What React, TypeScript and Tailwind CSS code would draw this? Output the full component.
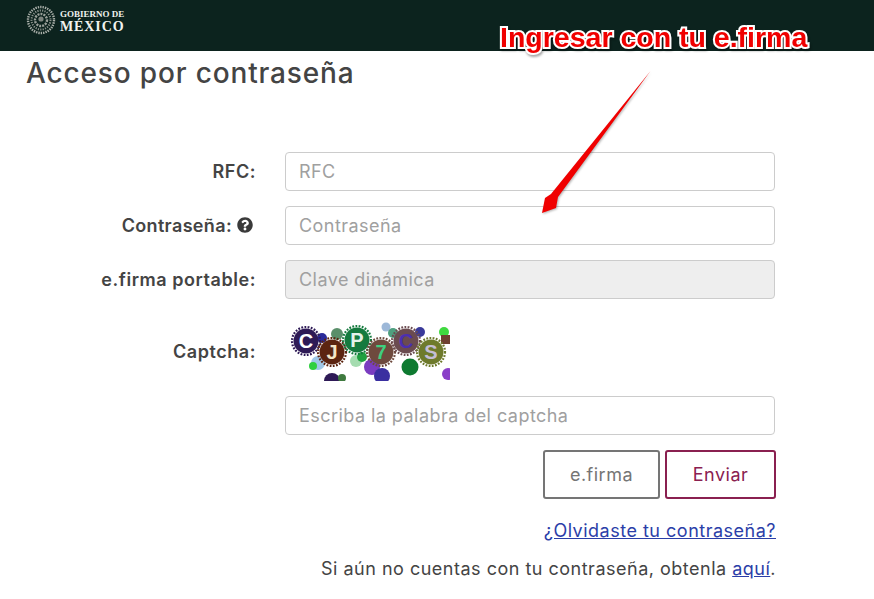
import React from "react";
import { FaQuestionCircle } from "react-icons/fa";

const font = "font-['Inter','Noto_Sans',sans-serif]";

const Row = ({ label, children }: { label: React.ReactNode; children: React.ReactNode }) => (
  <div className="flex items-center">
    <div className="w-[256px] flex justify-end items-center text-[18px] font-semibold text-[#444] tracking-[0.55px]">
      {label}
    </div>
    <div className="ml-[29px] w-[490px]">{children}</div>
  </div>
);

const Field = ({ placeholder, disabled }: { placeholder: string; disabled?: boolean }) => (
  <input
    placeholder={placeholder}
    disabled={disabled}
    className={
      "block w-full h-[39px] px-[13px] pb-[1px] rounded-[4px] border border-[#ccc] text-[18px] tracking-[0.45px] outline-none placeholder:text-[#a0a0a0] " +
      (disabled ? "bg-[#eeeeee]" : "bg-white")
    }
  />
);

const gears = [
  { x: 21, y: 26, c: "#2e1a56", t: "C", f: "#ffffff" },
  { x: 47, y: 37, c: "#5c2410", t: "J", f: "#f3e6c8" },
  { x: 72, y: 25, c: "#157a3e", t: "P", f: "#e6f2ea" },
  { x: 96, y: 37, c: "#6e4a3e", t: "7", f: "#3fcf7f" },
  { x: 121, y: 26, c: "#6b4b50", t: "C", f: "#4b2fb0" },
  { x: 146, y: 37, c: "#6e7a2c", t: "S", f: "#c4bdd4" },
];

const blobs = [
  [101, 12, 4.5, "#9db8d8"],
  [37, 23, 5, "#2a2a9a"],
  [52, 19, 6, "#5a8f6a"],
  [108, 18, 5, "#4f9f7f"],
  [135, 17, 5, "#3a3a9a"],
  [159, 17, 5, "#3fd93f"],
  [33, 48, 7, "#a0c8e8"],
  [28, 51, 4, "#30d040"],
  [71, 46, 6, "#a5dcb0"],
  [87, 52, 8, "#7a3cc0"],
  [77, 42, 5, "#20a040"],
  [125, 52, 8.5, "#0e7a30"],
  [97, 61, 8, "#3a2fa0"],
  [163, 59, 6, "#8a3fc8"],
  [47, 66, 8, "#2e1a56"],
  [57, 63, 4, "#3f7a3f"],
] as const;

const Captcha = () => (
  <svg width="165" height="66" viewBox="0 0 165 66" className="block">
    {blobs.map(([x, y, r, c], i) => (
      <circle key={i} cx={x} cy={y} r={r} fill={c} />
    ))}
    <rect x="156" y="20" width="9" height="9" fill="#6e4030" />
    {gears.map((g) => (
      <g key={g.x}>
        <circle cx={g.x} cy={g.y} r="12.5" fill={g.c} />
        <circle cx={g.x} cy={g.y} r="14" fill="none" stroke={g.c} strokeWidth="2.2" strokeDasharray="1.8 1.4" />
        <text
          x={g.x}
          y={g.y + 7}
          textAnchor="middle"
          fontFamily="Liberation Sans"
          fontWeight="700"
          fontSize="20"
          fill={g.f}
        >
          {g.t}
        </text>
      </g>
    ))}
  </svg>
);

const Seal = () => (
  <svg width="30" height="30" viewBox="0 0 30 30" fill="none">
    <circle cx="15" cy="15" r="13" stroke="#a9afa9" strokeWidth="2.4" strokeDasharray="1.4 1" />
    <circle cx="15" cy="15" r="9.5" stroke="#8a918b" strokeWidth="2" strokeDasharray="1.2 1.2" />
    <circle cx="15" cy="15" r="6" stroke="#9aa09a" strokeWidth="2.4" strokeDasharray="2 1" />
    <circle cx="15" cy="14" r="2.6" fill="#7d847e" />
  </svg>
);

export default function App() {
  return (
    <div className={"relative w-[874px] h-[599px] overflow-hidden bg-white text-[#444] " + font}>
      <header className="h-[51px] bg-[#0c231e] flex items-start pl-[26px] pt-[5px]">
        <Seal />
        <div className="ml-[4px] mt-[4px] font-['Liberation_Serif',serif] font-bold text-[#f0f2ee]">
          <div className="text-[9px] leading-[11px]">GOBIERNO DE</div>
          <div className="text-[14px] leading-[13px] tracking-[0.9px]">MÉXICO</div>
        </div>
      </header>

      <h1 className="ml-[26px] mt-[3px] text-[28px] leading-[38px] font-medium text-[#444] tracking-[0.85px]">
        Acceso por contraseña
      </h1>

      <form className="mt-[60px] flex flex-col">
        <div className="flex flex-col gap-[15px]">
          <Row label="RFC:">
            <Field placeholder="RFC" />
          </Row>
          <Row
            label={
              <>
                <span className="tracking-[0.35px]">Contraseña:</span>
                <FaQuestionCircle className="ml-[5px] mr-[3px] mb-[2px] text-[16px] text-[#3a3a3a]" />
              </>
            }
          >
            <Field placeholder="Contraseña" />
          </Row>
          <Row label="e.firma portable:">
            <Field placeholder="Clave dinámica" disabled />
          </Row>
        </div>

        <div className="mt-[16px]">
          <Row label={<span className="mt-[6px]">Captcha:</span>}>
            <Captcha />
          </Row>
        </div>

        <div className="mt-[15px]">
          <Row label="">
            <Field placeholder="Escriba la palabra del captcha" />
          </Row>
        </div>

        <div className="mt-[15px] ml-[285px] w-[491px] flex justify-end gap-[5px]">
          <button type="button" className="w-[117px] h-[49px] rounded-[3px] border-2 border-[#757575] text-[#757575] text-[18px] tracking-[0.5px]">
            e.firma
          </button>
          <button type="button" className="w-[111px] h-[49px] rounded-[3px] border-2 border-[#8a2050] text-[#8a2050] text-[18px] tracking-[0.5px]">
            Enviar
          </button>
        </div>

        <div className="mt-[20px] ml-[285px] w-[491px] text-right text-[18px] leading-[24px] tracking-[0.5px]">
          <a href="#" className="text-[#2b3ea8] underline">¿Olvidaste tu contraseña?</a>
        </div>
        <div className="mt-[14px] ml-[185px] w-[591px] text-right text-[18px] leading-[24px] tracking-[0.5px] text-[#444]">
          Si aún no cuentas con tu contraseña, obtenla <a href="#" className="text-[#2b3ea8] underline">aquí</a>.
        </div>
      </form>

      {/* anotacion sobre la captura */}
      <div className="absolute left-[500px] top-[20px] font-['Liberation_Sans',sans-serif] font-bold text-[28.5px] leading-[34px] whitespace-nowrap text-[#f00000] [paint-order:stroke_fill] [-webkit-text-stroke:4px_white] [filter:drop-shadow(1px_2px_1px_rgba(0,0,0,0.35))]">
        Ingresar con tu e.firma
      </div>
      <svg width="874" height="599" className="absolute left-0 top-0 pointer-events-none">
        <polygon
          points="650.5,71 558,197 556,208 542,213 545,198 551,194"
          fill="#f00000"
          style={{ filter: "drop-shadow(1px 1px 1px rgba(0,0,0,0.3))" }}
        />
      </svg>
    </div>
  );
}
